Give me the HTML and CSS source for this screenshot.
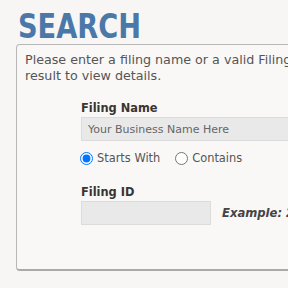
FILE: index.html
```html
<!DOCTYPE html>
<html lang="en">
<head>
  <meta charset="UTF-8">
  <title>Search</title>
  <link rel="stylesheet" href="styles.css">
</head>
<body>
  <h1 class="page-title">SEARCH</h1>
  <div class="search-box">
    <p class="intro">Please enter a filing name or a valid Filing ID and select a<br>result to view details.</p>
    <div class="field">
      <label class="field-label" for="filing-name">Filing Name</label>
      <input id="filing-name" class="text-input wide" type="text" placeholder="Your Business Name Here">
    </div>
    <div class="radio-row">
      <label class="radio"><input type="radio" name="mode" checked> Starts With</label>
      <label class="radio"><input type="radio" name="mode"> Contains</label>
    </div>
    <div class="field">
      <label class="field-label" for="filing-id">Filing ID</label>
      <div class="id-row">
        <input id="filing-id" class="text-input short" type="text">
        <span class="example">Example: 2021000123</span>
      </div>
    </div>
  </div>
</body>
</html>
```

FILE: styles.css
```css
body {
  margin: 0;
  padding: 0;
  background-color: #f7f6f4;
  font-family: "DejaVu Sans", Verdana, sans-serif;
  font-size: 12px;
  color: #555;
  overflow: hidden;
}
.page-title {
  margin: 8px 0 0 18px;
  font-family: "DejaVu Sans Condensed", "Liberation Sans", sans-serif;
  font-size: 34px;
  font-weight: bold;
  line-height: 36px;
  color: #4a78a8;
  transform: scaleX(0.89);
  transform-origin: left center;
}
.search-box {
  margin: 0 0 0 16px;
  width: 440px;
  height: 227px;
  border: 1px solid #b8b8b8;
  border-bottom: 2px solid #aaa;
  border-radius: 4px;
  background-color: #f9f8f6;
  box-sizing: border-box;
  padding: 7px 0 0 8px;
}
.intro {
  margin: 0;
  font-size: 12.7px;
  line-height: 16px;
  white-space: nowrap;
}
.field {
  margin-left: 56px;
}
.field:first-of-type {
  margin-top: 16px;
}
.field-label {
  display: block;
  font-size: 11.4px;
  font-weight: bold;
  color: #3a3530;
  line-height: 16px;
  margin-bottom: 1px;
}
.text-input {
  height: 24px;
  box-sizing: border-box;
  border: 1px solid #dcdcdc;
  background-color: #e9e9e9;
  font-family: "DejaVu Sans", Verdana, sans-serif;
  font-size: 11px;
  color: #555;
  padding: 0 6px;
  margin: 0;
}
.text-input::placeholder {
  color: #666;
}
.wide {
  width: 260px;
}
.short {
  width: 130px;
}
.radio-row {
  display: flex;
  gap: 15px;
  margin: 9px 0 0 55px;
  font-size: 11.4px;
  line-height: 16px;
}
.radio {
  display: flex;
  align-items: center;
  gap: 4px;
}
.radio input {
  margin: 0;
  width: 13px;
  height: 13px;
}
.radio-row + .field {
  margin-top: 18px;
}
.id-row {
  display: flex;
  align-items: center;
  gap: 11px;
}
.example {
  font-size: 11.6px;
  font-weight: bold;
  font-style: italic;
  color: #444;
  white-space: nowrap;
}
```
